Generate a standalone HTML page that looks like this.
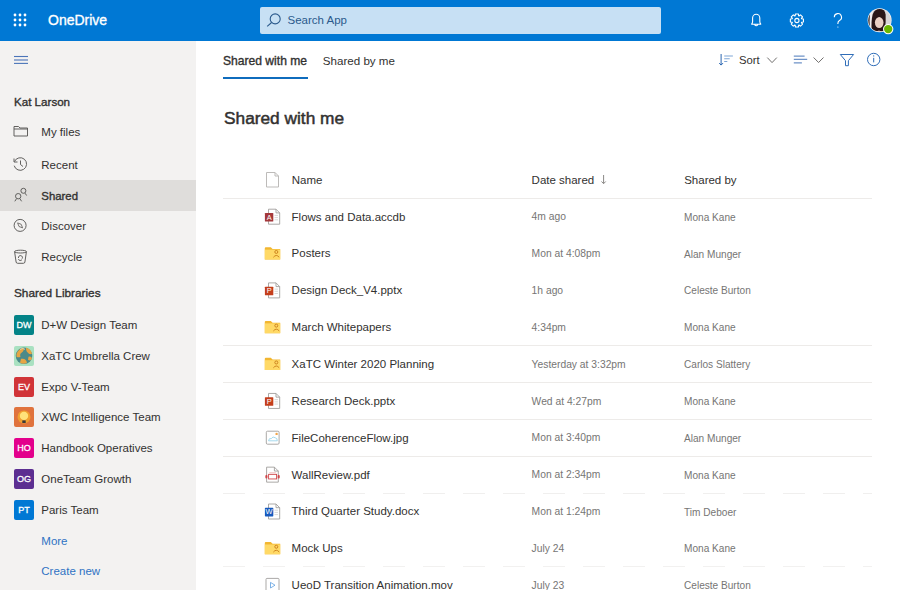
<!DOCTYPE html>
<html><head><meta charset="utf-8">
<style>
*{margin:0;padding:0;box-sizing:border-box}
html,body{width:900px;height:590px;overflow:hidden;background:#fff;font-family:"Liberation Sans",sans-serif;color:#323130}
.a{position:absolute;white-space:nowrap;line-height:1}
svg{position:absolute;overflow:visible}
.sq{position:absolute;width:20px;height:20px;border-radius:2px;color:#fff;font-size:9px;font-weight:normal;-webkit-text-stroke:0.3px #fff;text-align:center;line-height:20px}
.sep{position:absolute;left:223px;width:649px;height:1px;background:#edebe9}
</style></head><body>
<div style="position:absolute;left:0;top:0;width:900px;height:41px;background:#0078d4"></div>
<svg style="left:0;top:0" width="40" height="40" fill="#fff"><circle cx="15" cy="15" r="1.4"/><circle cx="20" cy="15" r="1.4"/><circle cx="25" cy="15" r="1.4"/><circle cx="15" cy="20" r="1.4"/><circle cx="20" cy="20" r="1.4"/><circle cx="25" cy="20" r="1.4"/><circle cx="15" cy="25" r="1.4"/><circle cx="20" cy="25" r="1.4"/><circle cx="25" cy="25" r="1.4"/></svg>
<div class="a" style="left:48px;top:13.15px;font-size:14px;color:#fff;font-weight:normal;-webkit-text-stroke:0.35px #fff;">OneDrive</div>
<div style="position:absolute;left:260px;top:7px;width:401px;height:27px;background:#c7e0f4;border-radius:2px"></div>
<svg style="left:0;top:0" width="300" height="40" fill="none" stroke="#2b5a8c" stroke-width="1.1"><circle cx="275.2" cy="18.9" r="5"/><line x1="271.6" y1="22.5" x2="267.2" y2="26.4"/></svg>
<div class="a" style="left:287.5px;top:15.27px;font-size:11.5px;color:#2b5a8c;font-weight:normal;">Search App</div>
<svg style="left:0;top:0" width="900" height="40" fill="none" stroke="#fff" stroke-width="1.1">
<path d="M751.2 24.2 h10 M751.4 24.2 q1.2 -0.6 1.2 -2.6 v-3.6 a3.6 3.8 0 0 1 7.2 0 v3.6 q0 2 1.2 2.6 M754.6 24.6 q1.6 2.4 3.2 0"/>
<circle cx="796.9" cy="20.5" r="2.1"/>
<path d="M795.14 15.82 L795.44 13.96 L798.36 13.96 L798.66 15.82 L798.96 15.95 L800.49 14.84 L802.56 16.91 L801.45 18.44 L801.58 18.74 L803.44 19.04 L803.44 21.96 L801.58 22.26 L801.45 22.56 L802.56 24.09 L800.49 26.16 L798.96 25.05 L798.66 25.18 L798.36 27.04 L795.44 27.04 L795.14 25.18 L794.84 25.05 L793.31 26.16 L791.24 24.09 L792.35 22.56 L792.22 22.26 L790.36 21.96 L790.36 19.04 L792.22 18.74 L792.35 18.44 L791.24 16.91 L793.31 14.84 L794.84 15.95 Z" stroke-linejoin="round"/>
<path d="M834.3 17.2 a3.6 3.6 0 1 1 5.2 3.2 c-1.3 0.7 -1.6 1.4 -1.6 2.8 v0.8"/>
<circle cx="837.9" cy="27" r="0.6" fill="#fff" stroke="none"/>
</svg>
<svg style="left:0;top:0" width="900" height="40">
<defs><clipPath id="av"><circle cx="879.6" cy="20.2" r="11.3"/></clipPath><filter id="bl" x="-10%" y="-10%" width="120%" height="120%"><feGaussianBlur stdDeviation="0.45"/></filter></defs>
<circle cx="879.6" cy="20.2" r="12" fill="#f2f2f2"/>
<g clip-path="url(#av)"><g filter="url(#bl)">
<rect x="866" y="7" width="28" height="28" fill="#d8d5d5"/>
<path d="M870.5 9 l3 0 q-3 11 -1 25 h-3 q-2 -13 1 -25z" fill="#f0ecec"/>
<path d="M866 8 h4.8 q-2.5 12 0 26 h-4.8 z" fill="#2a1e1e"/>
<path d="M871.8 33 q-1 -12 1 -19 q2.5 -5.5 7 -5.5 q5 0.5 5.8 6 q0.5 7 -0.8 15 l-3 3.5 z" fill="#2a1616"/>
<ellipse cx="879.2" cy="22.6" rx="4.3" ry="5.5" fill="#ead0c4"/>
<path d="M874.6 19.3 q0 -5 4.7 -5.2 q4.7 0.2 4.7 5.2 q-2 -2.3 -4.7 -2.6 q-3 0.3 -4.7 2.6z" fill="#2a1616"/>
<path d="M874 34 q5 -7 10 0 z" fill="#caa49a"/>
</g></g>
<circle cx="888.2" cy="29.1" r="5.2" fill="#fff"/>
<circle cx="888.2" cy="29.1" r="4.2" fill="#6bb700"/>
</svg>
<div style="position:absolute;left:0;top:41px;width:196px;height:549px;background:#f3f2f1"></div>
<div style="position:absolute;left:0;top:180px;width:196px;height:31px;background:#dfdddb"></div>
<svg style="left:0;top:0" width="40" height="70" stroke="#4a74b8" stroke-width="1.1"><line x1="14" y1="56.5" x2="28" y2="56.5"/><line x1="14" y1="60" x2="28" y2="60"/><line x1="14" y1="63.4" x2="28" y2="63.4"/></svg>
<div class="a" style="left:14px;top:96.38px;font-size:11.6px;color:#323130;font-weight:normal;-webkit-text-stroke:0.35px #323130;">Kat Larson</div>
<div class="a" style="left:41.3px;top:127.27px;font-size:11.5px;color:#323130;font-weight:normal;">My files</div>
<div class="a" style="left:41.3px;top:159.67px;font-size:11.5px;color:#323130;font-weight:normal;">Recent</div>
<div class="a" style="left:41.3px;top:190.55px;font-size:11.4px;color:#323130;font-weight:normal;-webkit-text-stroke:0.35px #323130;">Shared</div>
<div class="a" style="left:41.3px;top:221.37px;font-size:11.5px;color:#323130;font-weight:normal;">Discover</div>
<div class="a" style="left:41.3px;top:252.27px;font-size:11.5px;color:#323130;font-weight:normal;">Recycle</div>
<svg style="left:0;top:0" width="40" height="280" fill="none" stroke="#5a5856" stroke-width="0.95">
<path d="M14 126.5 h4.5 l1.5 1.5 h7.5 v8 h-13.5 z M14 129 h13.5"/>
<path d="M14.5 161.5 a6.3 6.3 0 1 1 -0.3 4.2"/><path d="M14 158.5 v3.5 h3.5"/><path d="M20.5 160.5 v4 l2.5 2"/>
<circle cx="18.2" cy="196.2" r="2.7"/><path d="M14.8 201.3 l1.6 -2.4 M21.6 201.3 l-1.6 -2.4"/>
<circle cx="23.4" cy="190.8" r="2.5"/><path d="M26.6 195.5 l-1.5 -2.3"/>
<circle cx="20.1" cy="225.4" r="6"/><path d="M17.6 222.9 l3.6 1.4 l1.4 3.6 l-3.6 -1.4 z" stroke-width="0.8" stroke-linejoin="round"/>
<path d="M14.6 251.8 l1.5 10.2 q0.2 1.3 1.5 1.3 h5.8 q1.3 0 1.5 -1.3 l1.5 -10.2"/><ellipse cx="20.5" cy="251.6" rx="6" ry="1.4"/>
<path d="M18.5 258 a2 2 0 1 1 3.6 0.7 M22 259.5 a2 2 0 0 1 -3.6 -0.3"/>
</svg>
<div class="a" style="left:14px;top:288.31px;font-size:11.8px;color:#323130;font-weight:normal;-webkit-text-stroke:0.35px #323130;">Shared Libraries</div>
<div class="sq" style="left:14px;top:315.0px;background:#038387">DW</div>
<div class="a" style="left:41.3px;top:320.07px;font-size:11.5px;color:#323130;font-weight:normal;">D+W Design Team</div>
<div class="sq" style="left:14px;top:345.8px;background:#a9e1c1"></div>
<div class="a" style="left:41.3px;top:350.87px;font-size:11.5px;color:#323130;font-weight:normal;">XaTC Umbrella Crew</div>
<div class="sq" style="left:14px;top:376.6px;background:#d13438">EV</div>
<div class="a" style="left:41.3px;top:381.67px;font-size:11.5px;color:#323130;font-weight:normal;">Expo V-Team</div>
<div class="sq" style="left:14px;top:407.4px;background:#e0733d"></div>
<div class="a" style="left:41.3px;top:412.47px;font-size:11.5px;color:#323130;font-weight:normal;">XWC Intelligence Team</div>
<div class="sq" style="left:14px;top:438.2px;background:#e3008c">HO</div>
<div class="a" style="left:41.3px;top:443.27px;font-size:11.5px;color:#323130;font-weight:normal;">Handbook Operatives</div>
<div class="sq" style="left:14px;top:469.0px;background:#5c2e91">OG</div>
<div class="a" style="left:41.3px;top:474.07px;font-size:11.5px;color:#323130;font-weight:normal;">OneTeam Growth</div>
<div class="sq" style="left:14px;top:499.8px;background:#0078d4">PT</div>
<div class="a" style="left:41.3px;top:504.87px;font-size:11.5px;color:#323130;font-weight:normal;">Paris Team</div>
<svg style="left:0;top:0" width="40" height="590">
<circle cx="24" cy="355.8" r="8.3" fill="#4b8a8a"/>
<path d="M16.5 353.8 q2 -5 7 -6 q1 3 -2 5 q-2 1 -1 4 q-2 1 -4 0 z M26 347.8 q5 1 6 6 q-3 1 -4 -1 q-2 -1 -2 -5 z M21 358.8 q5 -1 6 4 q-3 2 -7 0 z M28.5 356.8 q3 -1 3.5 2 q-2 3 -4 1 z" fill="#e6a544"/>
<path d="M20 349.3 q3 -1.5 5 0" stroke="#f3e3c0" stroke-width="0.8" fill="none"/>
<circle cx="24" cy="416.90000000000003" r="6.5" fill="#f0a030"/>
<circle cx="24" cy="415.90000000000003" r="4.2" fill="#ffe27a"/>
<rect x="22.3" y="420.40000000000003" width="3.4" height="2.6" fill="#3a3a3a"/>
</svg>
<div class="a" style="left:41.3px;top:536.07px;font-size:11.5px;color:#2f72c4;font-weight:normal;">More</div>
<div class="a" style="left:41.3px;top:566.07px;font-size:11.5px;color:#2f72c4;font-weight:normal;">Create new</div>
<div class="a" style="left:223px;top:54.86px;font-size:12.1px;color:#323130;font-weight:normal;-webkit-text-stroke:0.35px #323130;">Shared with me</div>
<div style="position:absolute;left:223px;top:77px;width:85px;height:2px;background:#0f6cbd"></div>
<div class="a" style="left:322.8px;top:54.78px;font-size:11.6px;color:#323130;font-weight:normal;">Shared by me</div>
<svg style="left:0;top:0" width="900" height="80" fill="none" stroke-width="1.1">
<path d="M721.1 54 v11" stroke="#2a66b0" stroke-width="1"/><path d="M719.2 63.1 l1.9 2 l1.9 -2" stroke="#2a66b0" stroke-width="1"/>
<path d="M724.2 56 h8.7 M724.2 58.8 h5.5 M724.2 61.5 h3.1" stroke="#7fa6d6"/>
<path d="M767.3 57.6 l4.75 5 l4.75 -5" stroke="#605e5c" stroke-width="0.9"/>
<path d="M793.8 56.1 h10.8 M793.8 59.4 h13.4 M793.8 62.9 h8.1" stroke="#6f93c8"/>
<path d="M813.6 57.5 l4.95 5 l4.95 -5" stroke="#605e5c" stroke-width="0.9"/>
<path d="M840.3 54.5 h13.3 l-5.2 6.2 v5 h-2.9 v-5 z" stroke="#2f6db8" stroke-width="1" stroke-linejoin="round"/>
<circle cx="873.7" cy="59.5" r="6.2" stroke="#2f6db8" stroke-width="1"/>
<path d="M873.7 57.8 v4.6" stroke="#2f6db8" stroke-width="1"/><circle cx="873.7" cy="55.9" r="0.6" fill="#2a66b0" stroke="none"/>
</svg>
<div class="a" style="left:739px;top:54.53px;font-size:11.3px;color:#323130;font-weight:normal;">Sort</div>
<div class="a" style="left:224px;top:109.56px;font-size:17.3px;color:#323130;font-weight:normal;-webkit-text-stroke:0.5px #323130;">Shared with me</div>
<div class="a" style="left:291.8px;top:175.37px;font-size:11.5px;color:#323130;font-weight:normal;">Name</div>
<div class="a" style="left:531.6px;top:175.37px;font-size:11.5px;color:#323130;font-weight:normal;">Date shared</div>
<svg style="left:0;top:0" width="900" height="200" fill="none" stroke="#8a8886" stroke-width="1"><path d="M603.6 175 v8.5 M601.5 181.5 l2.1 2.2 l2.1 -2.2"/></svg>
<div class="a" style="left:684.2px;top:175.37px;font-size:11.5px;color:#323130;font-weight:normal;">Shared by</div>
<svg style="left:0;top:0" width="300" height="200" fill="#fff" stroke="#bdbbb9" stroke-width="1"><path d="M266.5 172.5 h8.5 l3.5 3.5 v11 h-12 z"/><path d="M275 172.5 v3.5 h3.5" fill="none"/></svg>
<div class="sep" style="top:198px;background:#edebe9"></div>
<div class="a" style="left:291.6px;top:211.57px;font-size:11.5px;color:#323130;font-weight:normal;">Flows and Data.accdb</div>
<div class="a" style="left:531.6px;top:212.28px;font-size:10.3px;color:#767574;font-weight:normal;">4m ago</div>
<div class="a" style="left:684px;top:212.75px;font-size:10.1px;color:#767574;font-weight:normal;">Mona Kane</div>
<svg style="left:0;top:0" width="300" height="590"><path d="M268.5 209.20000000000002 h7.5 l3.7 3.7 v11.3 h-11.2 z" fill="#fff" stroke="#a19f9d" stroke-width="0.9"/><path d="M276 209.20000000000002 v3.7 h3.7" fill="none" stroke="#a19f9d" stroke-width="0.9"/><path d="M274.5 215.4 h3.5 M274.5 217.6 h3.5 M274.5 219.8 h3.5" stroke="#d0cfce" stroke-width="0.8"/><rect x="264.9" y="213.0" width="8.4" height="8.6" rx="0.6" fill="#a4373a"/><text x="269.1" y="219.6" font-family="Liberation Sans" font-size="7.4" font-weight="normal" fill="#fff" text-anchor="middle">A</text></svg>
<div class="a" style="left:291.6px;top:248.42px;font-size:11.5px;color:#323130;font-weight:normal;">Posters</div>
<div class="a" style="left:531.6px;top:249.13px;font-size:10.3px;color:#767574;font-weight:normal;">Mon at 4:08pm</div>
<div class="a" style="left:684px;top:249.60px;font-size:10.1px;color:#767574;font-weight:normal;">Alan Munger</div>
<svg style="left:0;top:0" width="300" height="590"><path d="M264.8 259.45000000000005 v-11.2 q0 -1 1 -1 h5 l1.8 1.8 h7.6 v10.4 z" fill="#f2b631"/><rect x="264.8" y="249.65000000000003" width="15.4" height="9.8" fill="#ffd966"/><circle cx="276.3" cy="251.95000000000002" r="1.5" fill="none" stroke="#c77a17" stroke-width="0.9"/><path d="M273.4 257.25 q2.9 -3.6 5.8 0" fill="none" stroke="#c77a17" stroke-width="0.9"/></svg>
<div class="a" style="left:291.6px;top:285.27px;font-size:11.5px;color:#323130;font-weight:normal;">Design Deck_V4.pptx</div>
<div class="a" style="left:531.6px;top:285.98px;font-size:10.3px;color:#767574;font-weight:normal;">1h ago</div>
<div class="a" style="left:684px;top:286.45px;font-size:10.1px;color:#767574;font-weight:normal;">Celeste Burton</div>
<svg style="left:0;top:0" width="300" height="590"><path d="M268.5 282.90000000000003 h7.5 l3.7 3.7 v11.3 h-11.2 z" fill="#fff" stroke="#a19f9d" stroke-width="0.9"/><path d="M276 282.90000000000003 v3.7 h3.7" fill="none" stroke="#a19f9d" stroke-width="0.9"/><path d="M274.5 289.1 h3.5 M274.5 291.3 h3.5 M274.5 293.5 h3.5" stroke="#d0cfce" stroke-width="0.8"/><rect x="264.9" y="286.70000000000005" width="8.4" height="8.6" rx="0.6" fill="#c43e1c"/><text x="269.1" y="293.3" font-family="Liberation Sans" font-size="7.4" font-weight="normal" fill="#fff" text-anchor="middle">P</text></svg>
<div class="a" style="left:291.6px;top:322.12px;font-size:11.5px;color:#323130;font-weight:normal;">March Whitepapers</div>
<div class="a" style="left:531.6px;top:322.83px;font-size:10.3px;color:#767574;font-weight:normal;">4:34pm</div>
<div class="a" style="left:684px;top:323.30px;font-size:10.1px;color:#767574;font-weight:normal;">Mona Kane</div>
<svg style="left:0;top:0" width="300" height="590"><path d="M264.8 333.15000000000003 v-11.2 q0 -1 1 -1 h5 l1.8 1.8 h7.6 v10.4 z" fill="#f2b631"/><rect x="264.8" y="323.35" width="15.4" height="9.8" fill="#ffd966"/><circle cx="276.3" cy="325.65000000000003" r="1.5" fill="none" stroke="#c77a17" stroke-width="0.9"/><path d="M273.4 330.95000000000005 q2.9 -3.6 5.8 0" fill="none" stroke="#c77a17" stroke-width="0.9"/></svg>
<div class="sep" style="top:345px;background:#edebe9"></div>
<div class="a" style="left:291.6px;top:358.97px;font-size:11.5px;color:#323130;font-weight:normal;">XaTC Winter 2020 Planning</div>
<div class="a" style="left:531.6px;top:359.68px;font-size:10.3px;color:#767574;font-weight:normal;">Yesterday at 3:32pm</div>
<div class="a" style="left:684px;top:360.15px;font-size:10.1px;color:#767574;font-weight:normal;">Carlos Slattery</div>
<svg style="left:0;top:0" width="300" height="590"><path d="M264.8 370.00000000000006 v-11.2 q0 -1 1 -1 h5 l1.8 1.8 h7.6 v10.4 z" fill="#f2b631"/><rect x="264.8" y="360.20000000000005" width="15.4" height="9.8" fill="#ffd966"/><circle cx="276.3" cy="362.50000000000006" r="1.5" fill="none" stroke="#c77a17" stroke-width="0.9"/><path d="M273.4 367.80000000000007 q2.9 -3.6 5.8 0" fill="none" stroke="#c77a17" stroke-width="0.9"/></svg>
<div class="sep" style="top:382px;background:#edebe9"></div>
<div class="a" style="left:291.6px;top:395.82px;font-size:11.5px;color:#323130;font-weight:normal;">Research Deck.pptx</div>
<div class="a" style="left:531.6px;top:396.53px;font-size:10.3px;color:#767574;font-weight:normal;">Wed at 4:27pm</div>
<div class="a" style="left:684px;top:397.00px;font-size:10.1px;color:#767574;font-weight:normal;">Mona Kane</div>
<svg style="left:0;top:0" width="300" height="590"><path d="M268.5 393.45000000000005 h7.5 l3.7 3.7 v11.3 h-11.2 z" fill="#fff" stroke="#a19f9d" stroke-width="0.9"/><path d="M276 393.45000000000005 v3.7 h3.7" fill="none" stroke="#a19f9d" stroke-width="0.9"/><path d="M274.5 399.65000000000003 h3.5 M274.5 401.85 h3.5 M274.5 404.05 h3.5" stroke="#d0cfce" stroke-width="0.8"/><rect x="264.9" y="397.25000000000006" width="8.4" height="8.6" rx="0.6" fill="#c43e1c"/><text x="269.1" y="403.85" font-family="Liberation Sans" font-size="7.4" font-weight="normal" fill="#fff" text-anchor="middle">P</text></svg>
<div class="sep" style="top:419px;background:#edebe9"></div>
<div class="a" style="left:291.6px;top:432.67px;font-size:11.5px;color:#323130;font-weight:normal;">FileCoherenceFlow.jpg</div>
<div class="a" style="left:531.6px;top:433.38px;font-size:10.3px;color:#767574;font-weight:normal;">Mon at 3:40pm</div>
<div class="a" style="left:684px;top:433.85px;font-size:10.1px;color:#767574;font-weight:normal;">Alan Munger</div>
<svg style="left:0;top:0" width="300" height="590"><rect x="266.3" y="431.20000000000005" width="12.8" height="13" rx="1.2" fill="#fff" stroke="#a19f9d" stroke-width="0.9"/><path d="M268.5 440.80000000000007 q0.5 -3 2.8 -2.2 q1.5 -2.8 4 -0.8 q2 0 2 3 z" fill="none" stroke="#8fd1e8" stroke-width="0.8"/><circle cx="276.6" cy="433.90000000000003" r="1.2" fill="#f2a54a"/></svg>
<div class="sep" style="top:456px;background:#edebe9"></div>
<div class="a" style="left:291.6px;top:469.52px;font-size:11.5px;color:#323130;font-weight:normal;">WallReview.pdf</div>
<div class="a" style="left:531.6px;top:470.23px;font-size:10.3px;color:#767574;font-weight:normal;">Mon at 2:34pm</div>
<div class="a" style="left:684px;top:470.70px;font-size:10.1px;color:#767574;font-weight:normal;">Mona Kane</div>
<svg style="left:0;top:0" width="300" height="590"><path d="M266.6 467.15000000000003 h7.8 l3.9 3.9 v11.1 h-11.7 z" fill="#fff" stroke="#a19f9d" stroke-width="0.9"/><path d="M274.4 467.15000000000003 v3.9 h3.9" fill="none" stroke="#a19f9d" stroke-width="0.9"/><path d="M269.3 472.75 h6.6" stroke="#e8a6a6" stroke-width="0.7"/><rect x="268.6" y="474.35" width="8" height="4.6" fill="#fff" stroke="#d0464a" stroke-width="0.9"/><ellipse cx="266.4" cy="476.65000000000003" rx="1.1" ry="1.9" fill="#d0464a"/><ellipse cx="278.7" cy="476.65000000000003" rx="1.1" ry="1.9" fill="#d0464a"/></svg>
<div class="sep" style="top:493px;background:repeating-linear-gradient(90deg,#f0efee 0 22px,#fff 22px 40px)"></div>
<div class="a" style="left:291.6px;top:506.37px;font-size:11.5px;color:#323130;font-weight:normal;">Third Quarter Study.docx</div>
<div class="a" style="left:531.6px;top:507.08px;font-size:10.3px;color:#767574;font-weight:normal;">Mon at 1:24pm</div>
<div class="a" style="left:684px;top:507.55px;font-size:10.1px;color:#767574;font-weight:normal;">Tim Deboer</div>
<svg style="left:0;top:0" width="300" height="590"><path d="M268.5 504.00000000000006 h7.5 l3.7 3.7 v11.3 h-11.2 z" fill="#fff" stroke="#a19f9d" stroke-width="0.9"/><path d="M276 504.00000000000006 v3.7 h3.7" fill="none" stroke="#a19f9d" stroke-width="0.9"/><path d="M274.5 510.20000000000005 h3.5 M274.5 512.4000000000001 h3.5 M274.5 514.6 h3.5" stroke="#d0cfce" stroke-width="0.8"/><rect x="264.9" y="507.80000000000007" width="8.4" height="8.6" rx="0.6" fill="#185abd"/><text x="269.1" y="514.4000000000001" font-family="Liberation Sans" font-size="7.4" font-weight="normal" fill="#fff" text-anchor="middle">W</text></svg>
<div class="a" style="left:291.6px;top:543.22px;font-size:11.5px;color:#323130;font-weight:normal;">Mock Ups</div>
<div class="a" style="left:531.6px;top:543.93px;font-size:10.3px;color:#767574;font-weight:normal;">July 24</div>
<div class="a" style="left:684px;top:544.40px;font-size:10.1px;color:#767574;font-weight:normal;">Mona Kane</div>
<svg style="left:0;top:0" width="300" height="590"><path d="M264.8 554.2500000000001 v-11.2 q0 -1 1 -1 h5 l1.8 1.8 h7.6 v10.4 z" fill="#f2b631"/><rect x="264.8" y="544.45" width="15.4" height="9.8" fill="#ffd966"/><circle cx="276.3" cy="546.7500000000001" r="1.5" fill="none" stroke="#c77a17" stroke-width="0.9"/><path d="M273.4 552.0500000000001 q2.9 -3.6 5.8 0" fill="none" stroke="#c77a17" stroke-width="0.9"/></svg>
<div class="sep" style="top:566px;background:repeating-linear-gradient(90deg,#f2f1f0 0 22px,#fff 22px 40px)"></div>
<div class="a" style="left:291.6px;top:580.07px;font-size:11.5px;color:#323130;font-weight:normal;">UeoD Transition Animation.mov</div>
<div class="a" style="left:531.6px;top:580.78px;font-size:10.3px;color:#767574;font-weight:normal;">July 23</div>
<div class="a" style="left:684px;top:581.25px;font-size:10.1px;color:#767574;font-weight:normal;">Celeste Burton</div>
<svg style="left:0;top:0" width="300" height="590"><rect x="266" y="578.4" width="13" height="14" rx="1" fill="#fff" stroke="#a19f9d" stroke-width="0.9"/><path d="M270.5 582.4 l4.5 2.8 l-4.5 2.8 z" fill="none" stroke="#5ea0e0" stroke-width="0.8"/></svg>
</body></html>
